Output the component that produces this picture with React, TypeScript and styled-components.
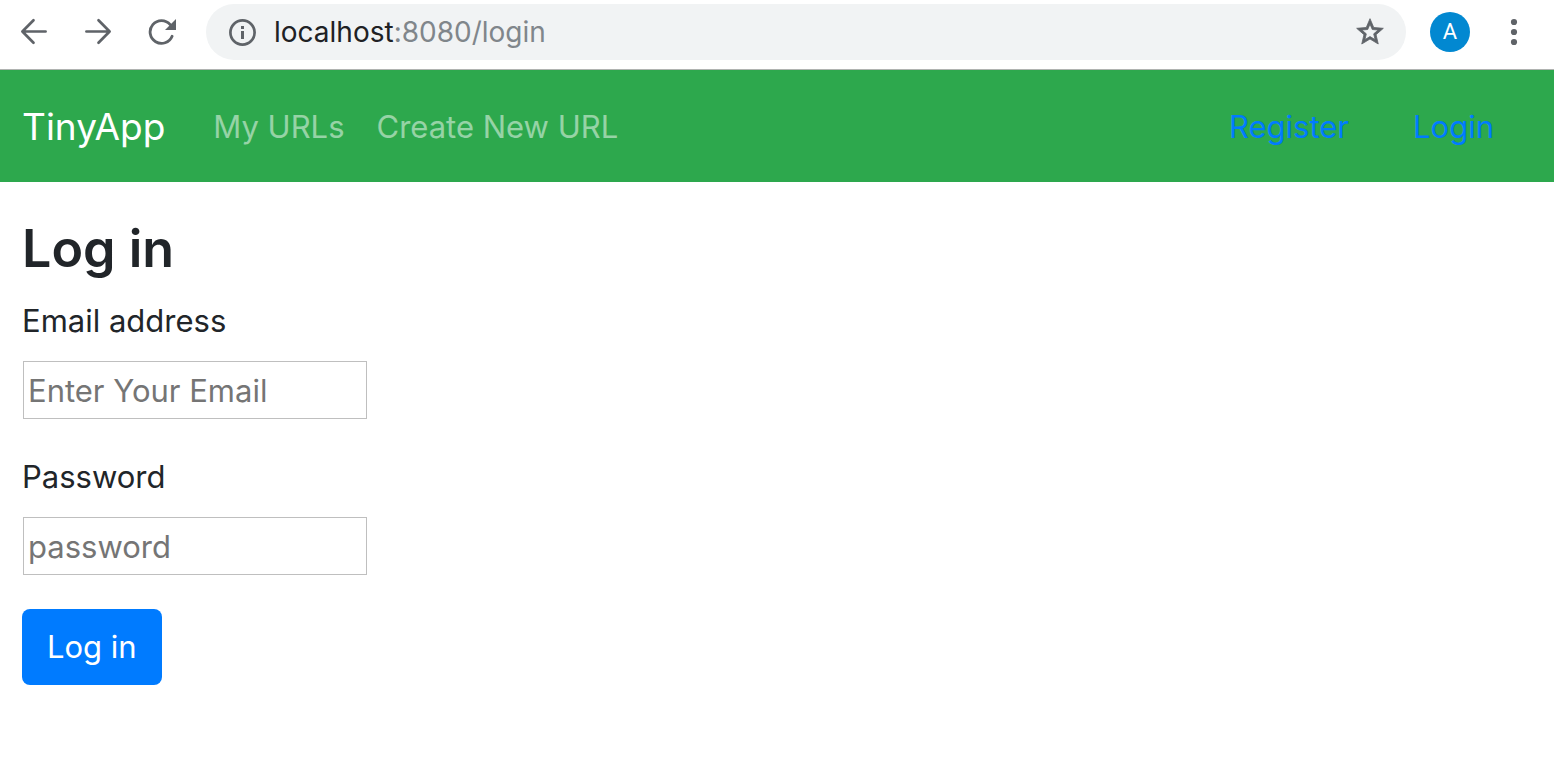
import React from "react";
import styled, { createGlobalStyle } from "styled-components";

const GlobalStyle = createGlobalStyle`
  *, *::before, *::after { box-sizing: border-box; }
  body {
    margin: 0;
    background: #fff;
    color: #212529;
    font-family: Inter, "Liberation Sans", sans-serif;
    font-size: 31px;
    line-height: 48px;
  }
`;

const Toolbar = styled.header`
  display: flex;
  align-items: center;
  gap: 24px;
  padding: 4px 20px 9px 14px;
  border-bottom: 1px solid #b0b3b1;
  background: #fff;
`;

const IconButton = styled.button<{ $size?: number }>`
  display: flex;
  flex: none;
  align-items: center;
  justify-content: center;
  width: ${({ $size = 40 }) => $size}px;
  height: ${({ $size = 40 }) => $size}px;
  padding: 0;
  border: 0;
  background: none;
  color: #5f6368;
  cursor: pointer;
`;

const AddressBar = styled.div`
  display: flex;
  flex: 1;
  align-items: center;
  gap: 16px;
  min-width: 0;
  height: 56px;
  padding: 0 20px;
  border-radius: 28px;
  background: #f1f3f4;
`;

const Address = styled.div`
  flex: 1;
  overflow: hidden;
  color: #80868b;
  font-size: 28px;
  line-height: 40px;
  white-space: nowrap;
  outline: none;
`;

const Host = styled.span`
  color: #202124;
`;

const Avatar = styled.button`
  flex: none;
  width: 40px;
  height: 40px;
  padding: 0;
  border: 0;
  border-radius: 50%;
  background: #0288d1;
  color: #fff;
  font-family: Roboto, sans-serif;
  font-size: 22px;
  line-height: 40px;
`;

const Navbar = styled.nav`
  display: flex;
  align-items: center;
  height: 112px;
  padding: 2px 60px 0 22px;
  background: #2da84d;
`;

const Brand = styled.a`
  margin-right: 48px;
  color: #fff;
  font-size: 37px;
  line-height: 60px;
  text-decoration: none;
`;

const NavGroup = styled.div<{ $gap: number; $end?: boolean }>`
  display: flex;
  gap: ${({ $gap }) => $gap}px;
  margin-left: ${({ $end }) => ($end ? "auto" : "0")};
`;

const NavLink = styled.a<{ $accent?: boolean }>`
  color: ${({ $accent }) => ($accent ? "#007bff" : "rgba(255, 255, 255, 0.5)")};
  text-decoration: none;
  white-space: nowrap;
`;

const Main = styled.main`
  padding: 33px 22px;
`;

const Title = styled.h1`
  margin: 0 0 14px;
  font-size: 52px;
  font-weight: 600;
  line-height: 68px;
`;

const Field = styled.div`
  display: flex;
  flex-direction: column;
  align-items: flex-start;
  gap: 16px;
  margin-bottom: 34px;
`;

const TextInput = styled.input`
  width: 344px;
  max-width: 100%;
  height: 58px;
  margin-left: 1px;
  padding: 0 4px;
  border: 1px solid #bfbfbf;
  border-radius: 0;
  background: #fff;
  color: #212529;
  font: inherit;
  &::placeholder { color: #757575; opacity: 1; }
`;

const SubmitButton = styled.button`
  padding: 14px 25px;
  border: 0;
  border-radius: 8px;
  background: #007bff;
  color: #fff;
  font: inherit;
  cursor: pointer;
`;

const BackIcon = () => (
  <svg width="28" height="28" viewBox="0 0 28 28" fill="none" stroke="currentColor" strokeWidth="2.7" strokeLinecap="round" strokeLinejoin="round" aria-hidden="true">
    <path d="M25.6 13.5H2.8M13.5 2.2L2.4 13.5L13.5 24.8" />
  </svg>
);

const ForwardIcon = () => (
  <svg width="28" height="28" viewBox="0 0 28 28" fill="none" stroke="currentColor" strokeWidth="2.7" strokeLinecap="round" strokeLinejoin="round" aria-hidden="true">
    <path d="M2.4 13.5H25.2M14.5 2.2L25.6 13.5L14.5 24.8" />
  </svg>
);

const ReloadIcon = () => (
  <svg width="28" height="28" viewBox="0 0 28 28" fill="none" aria-hidden="true">
    <path d="M22.2 6.6A11.4 11.4 0 1 0 24.1 18.2" stroke="currentColor" strokeWidth="2.8" strokeLinecap="round" />
    <path d="M28 1V12H17Z" fill="currentColor" />
  </svg>
);

const InfoIcon = () => (
  <svg width="28" height="28" viewBox="0 0 28 28" fill="none" aria-hidden="true">
    <circle cx="14.5" cy="14.5" r="12.1" stroke="currentColor" strokeWidth="2.7" />
    <path d="M13 8h3v3h-3zM13 13h3v8h-3z" fill="currentColor" />
  </svg>
);

const StarIcon = () => (
  <svg width="32" height="32" viewBox="0 0 24 24" fill="currentColor" aria-hidden="true">
    <path d="M22 9.24l-7.19-.62L12 2 9.19 8.63 2 9.24l5.46 4.73L5.82 21 12 17.27 18.18 21l-1.63-7.03L22 9.24zM12 15.4l-3.76 2.27 1-4.28-3.32-2.88 4.38-.38L12 6.1l1.71 4.04 4.38.38-3.32 2.88 1 4.28L12 15.4z" stroke="currentColor" strokeWidth="0.6" />
  </svg>
);

const MenuIcon = () => (
  <svg width="8" height="28" viewBox="0 0 8 28" fill="currentColor" aria-hidden="true">
    <circle cx="4" cy="4" r="3.1" />
    <circle cx="4" cy="14" r="3.1" />
    <circle cx="4" cy="24" r="3.1" />
  </svg>
);

export default function App() {
  return (
    <>
      <GlobalStyle />
      <Toolbar>
        <IconButton type="button" aria-label="Back"><BackIcon /></IconButton>
        <IconButton type="button" aria-label="Forward"><ForwardIcon /></IconButton>
        <IconButton type="button" aria-label="Reload"><ReloadIcon /></IconButton>
        <AddressBar>
          <IconButton type="button" $size={32} aria-label="Site information"><InfoIcon /></IconButton>
          <Address role="textbox" aria-label="Address" contentEditable suppressContentEditableWarning spellCheck={false}>
            <Host>localhost</Host>:8080/login
          </Address>
          <IconButton type="button" $size={32} aria-label="Bookmark this page"><StarIcon /></IconButton>
        </AddressBar>
        <Avatar type="button" aria-label="Account A">A</Avatar>
        <IconButton type="button" aria-label="Menu"><MenuIcon /></IconButton>
      </Toolbar>
      <Navbar>
        <Brand href="#">TinyApp</Brand>
        <NavGroup $gap={32}>
          <NavLink href="#urls">My URLs</NavLink>
          <NavLink href="#new">Create New URL</NavLink>
        </NavGroup>
        <NavGroup $gap={64} $end>
          <NavLink href="#register" $accent>Register</NavLink>
          <NavLink href="#login" $accent>Login</NavLink>
        </NavGroup>
      </Navbar>
      <Main>
        <Title>Log in</Title>
        <form onSubmit={(event) => event.preventDefault()}>
          <Field>
            <label htmlFor="email">Email address</label>
            <TextInput id="email" type="email" placeholder="Enter Your Email" />
          </Field>
          <Field>
            <label htmlFor="password">Password</label>
            <TextInput id="password" type="password" placeholder="password" />
          </Field>
          <SubmitButton type="submit">Log in</SubmitButton>
        </form>
      </Main>
    </>
  );
}
